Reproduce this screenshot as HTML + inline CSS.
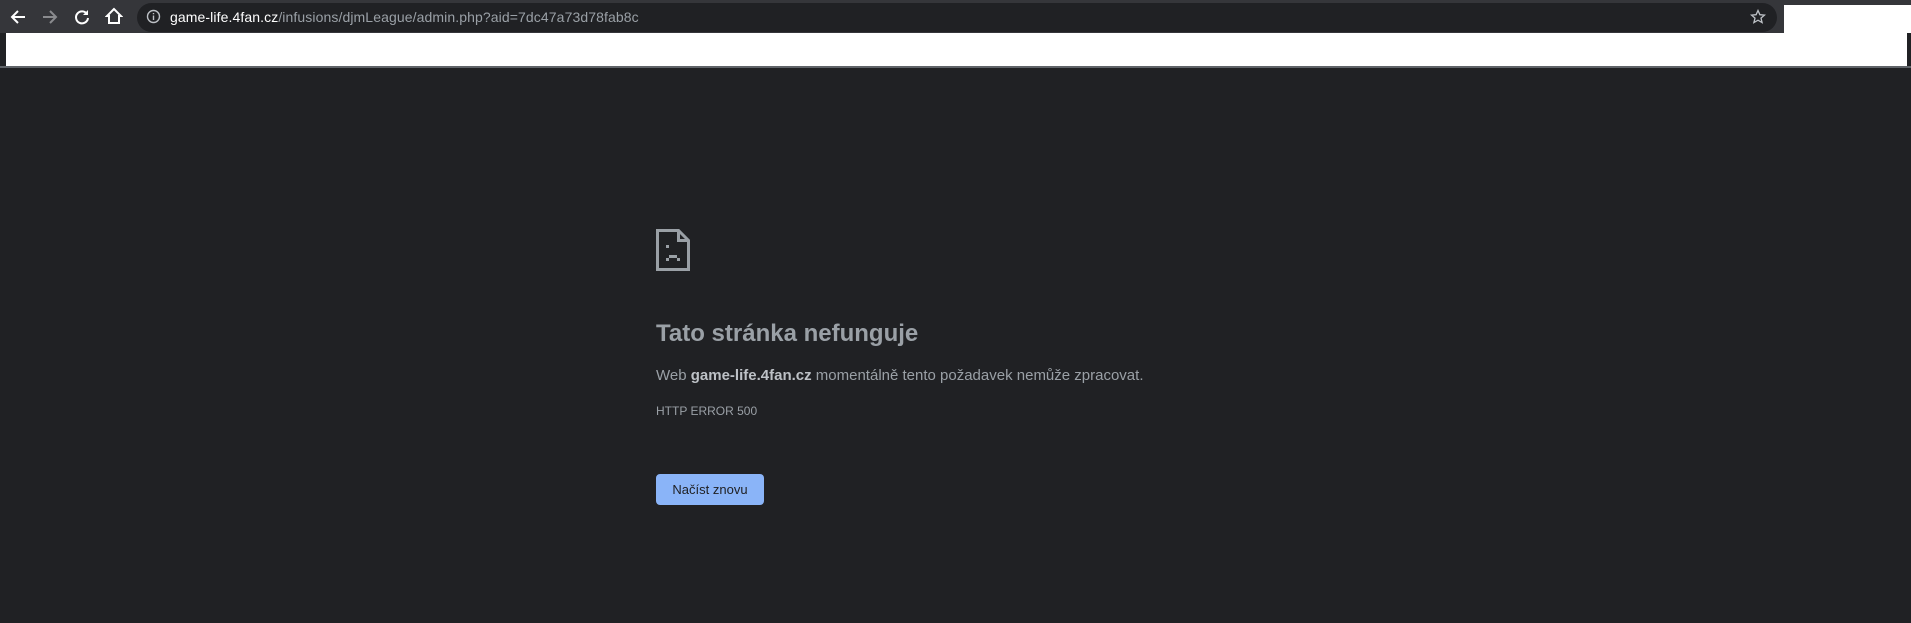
<!DOCTYPE html>
<html><head><meta charset="utf-8"><style>
*{margin:0;padding:0;box-sizing:border-box}
body{width:1911px;height:623px;background:#202124;font-family:"Liberation Sans",sans-serif;position:relative;overflow:hidden}
.top{position:absolute;left:0;top:0;width:1911px;height:33px;background:#35363a}
.omni{position:absolute;left:137px;top:3px;width:1640px;height:29px;border-radius:15px;background:#202124}
.url{position:absolute;left:170px;top:9px;font-size:14px;color:#9aa0a6;letter-spacing:0.1px}
.url b{color:#fff;font-weight:normal}
.wr{position:absolute;left:1784px;top:5px;width:127px;height:28px;background:#fff}
.band{position:absolute;left:6px;top:33px;width:1901px;height:33px;background:#fff}
.line{position:absolute;left:0;top:66px;width:1911px;height:2px;background:#5f6368}
.ic{position:absolute}
h1{position:absolute;left:656px;top:320px;font-size:24px;color:#9aa0a6;font-weight:600}
.p{position:absolute;left:656px;top:367px;font-size:15px;color:#9aa0a6}
.p b{color:#bdc1c6}
.e{position:absolute;left:656px;top:404px;font-size:12px;color:#9aa0a6}
.btn{position:absolute;left:656px;top:474px;width:108px;height:31px;background:#8ab4f8;border-radius:4px;color:#202124;font-size:13px;text-align:center;line-height:31px}
</style></head><body>
<div class="top"></div>
<svg class="ic" style="left:9px;top:8px" width="18" height="18" viewBox="0 0 18 18"><path d="M16 9H3M9 3L3 9l6 6" stroke="#fff" stroke-width="2" fill="none"/></svg>
<svg class="ic" style="left:41px;top:8px" width="18" height="18" viewBox="0 0 18 18"><path d="M2 9h13M9 3l6 6-6 6" stroke="#8a8b8e" stroke-width="2" fill="none"/></svg>
<svg class="ic" style="left:73px;top:8px" width="18" height="18" viewBox="0 0 18 18"><path d="M14 6A6 6 0 1 0 15 10" stroke="#fff" stroke-width="2" fill="none"/><path d="M15 2v5h-5z" fill="#fff"/></svg>
<svg class="ic" style="left:105px;top:7px" width="18" height="18" viewBox="0 0 18 18"><path d="M9 2L2 9h2v7h10V9h2z" stroke="#fff" stroke-width="2" fill="none"/></svg>
<div class="omni"></div>
<svg class="ic" style="left:146px;top:9px" width="15" height="15" viewBox="0 0 15 15"><circle cx="7.5" cy="7.5" r="6" stroke="#bdc1c6" stroke-width="1.4" fill="none"/><path d="M7.5 6.5v4.5M7.5 4v1.3" stroke="#bdc1c6" stroke-width="1.4"/></svg>
<div class="url"><b>game-life.4fan.cz</b>/infusions/djmLeague/admin.php?aid=7dc47a73d78fab8c</div>
<svg class="ic" style="left:1750px;top:9px" width="16" height="16" viewBox="0 0 16 16"><path d="M8 1.5l1.9 4.2 4.6.4-3.5 3 1.1 4.5L8 11.2l-4.1 2.4 1.1-4.5-3.5-3 4.6-.4z" stroke="#bdc1c6" stroke-width="1.3" fill="none"/></svg>
<div class="wr"></div>
<div class="band"></div>
<div class="line"></div>
<svg class="ic" style="left:656px;top:229px" width="34" height="42" viewBox="0 0 34 42"><path d="M1.5 1.5h21l10 10v29h-31z M22.5 1.5v10h10" stroke="#9aa0a6" stroke-width="3" fill="none"/><rect x="10" y="16" width="3" height="3" fill="#9aa0a6"/><rect x="10" y="29" width="3" height="3" fill="#9aa0a6"/><rect x="13" y="26" width="8" height="3" fill="#9aa0a6"/><rect x="21" y="29" width="3" height="3" fill="#9aa0a6"/></svg>
<h1>Tato stránka nefunguje</h1>
<div class="p">Web <b>game-life.4fan.cz</b> momentálně tento požadavek nemůže zpracovat.</div>
<div class="e">HTTP ERROR 500</div>
<div class="btn">Načíst znovu</div>
</body></html>
